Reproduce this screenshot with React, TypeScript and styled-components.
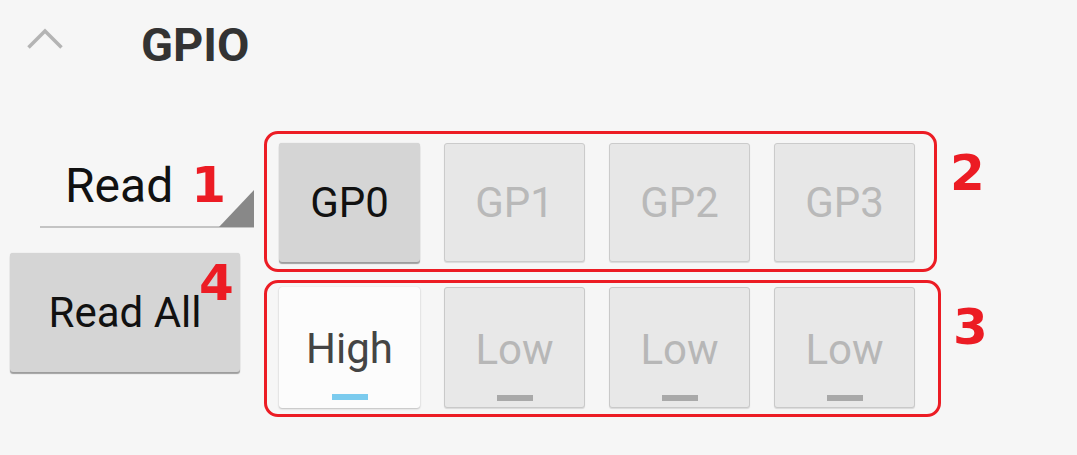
import styled, { createGlobalStyle } from "styled-components";

const GlobalStyle = createGlobalStyle`
  html, body {
    margin: 0;
    padding: 0;
    background: #f6f6f6;
    font-family: Roboto, "Liberation Sans", sans-serif;
  }
`;

const pins = ["GP0", "GP1", "GP2", "GP3"];
const levels = ["High", "Low", "Low", "Low"];

export default function App() {
  return (
    <Page>
      <GlobalStyle />
      <Header>
        <Chevron width="36" height="22" viewBox="0 0 36 22">
          <polyline
            points="1.5,19.5 18,3 34.5,19.5"
            fill="none"
            stroke="#b4b4b4"
            strokeWidth="3.5"
          />
        </Chevron>
        <Title>GPIO</Title>
      </Header>
      <Main>
        <LeftColumn>
          <Spinner>
            <SpinnerText>Read</SpinnerText>
            <Marker $inline>1</Marker>
          </Spinner>
          <ReadAllButton>
            Read All
            <Badge>4</Badge>
          </ReadAllButton>
        </LeftColumn>
        <RightColumn>
          <AnnotatedRow>
            <RedBox $width={673} $pad="9px 12px 7px">
              {pins.map((pin, i) => (
                <PinButton key={pin} $active={i === 0}>
                  {pin}
                </PinButton>
              ))}
            </RedBox>
            <Marker $top={17} $left={13}>
              2
            </Marker>
          </AnnotatedRow>
          <AnnotatedRow>
            <RedBox $width={677} $pad="4px 12px 6px">
              {levels.map((level, i) => (
                <LevelToggle key={i} $on={level === "High"}>
                  <LevelText>{level}</LevelText>
                  <LevelBar />
                </LevelToggle>
              ))}
            </RedBox>
            <Marker $top={22} $left={12}>
              3
            </Marker>
          </AnnotatedRow>
        </RightColumn>
      </Main>
    </Page>
  );
}

const Page = styled.div`
  width: 1077px;
  height: 455px;
  overflow: hidden;
`;

const Header = styled.div`
  display: flex;
  align-items: flex-start;
  padding: 17px 0 0 27px;
`;

const Chevron = styled.svg`
  display: block;
  margin-top: 11px;
`;

const Title = styled.h1`
  margin: 0 0 0 78px;
  font-size: 47px;
  line-height: 56px;
  font-weight: 700;
  color: #333333;
`;

const Main = styled.div`
  display: flex;
  gap: 9px;
  margin-top: 58px;
`;

const LeftColumn = styled.div`
  width: 255px;
  display: flex;
  flex-direction: column;
`;

const Spinner = styled.div`
  position: relative;
  margin: 27px 0 0 40px;
  width: 189px;
  padding: 0 0 12px 25px;
  border-bottom: 2px solid #c4c4c4;
  display: flex;
  align-items: baseline;

  &::after {
    content: "";
    position: absolute;
    right: 0;
    bottom: -1px;
    width: 35px;
    height: 37px;
    background: #888888;
    clip-path: polygon(100% 0, 100% 100%, 0 100%);
  }
`;

const SpinnerText = styled.span`
  font-size: 48px;
  line-height: 56px;
  color: #111111;
`;

const Marker = styled.span<{ $inline?: boolean; $top?: number; $left?: number }>`
  font-family: "DejaVu Sans", sans-serif;
  font-weight: 700;
  font-size: 50px;
  line-height: 50px;
  color: #ec1c24;
  margin-left: ${(p) => (p.$inline ? 18 : p.$left ?? 0)}px;
  margin-top: ${(p) => p.$top ?? 0}px;
  align-self: ${(p) => (p.$inline ? "baseline" : "flex-start")};
`;

const ReadAllButton = styled.div`
  position: relative;
  margin: 25px 0 0 10px;
  width: 230px;
  height: 119px;
  border-radius: 3px;
  background: #d5d5d5;
  box-shadow: 0 2px 1px rgba(0, 0, 0, 0.35), 0 0 1px rgba(0, 0, 0, 0.2);
  display: flex;
  align-items: center;
  justify-content: center;
  font-size: 42px;
  color: #111111;
`;

const Badge = styled.span`
  position: absolute;
  left: 189px;
  top: 5px;
  font-family: "DejaVu Sans", sans-serif;
  font-weight: 700;
  font-size: 50px;
  line-height: 50px;
  color: #ec1c24;
`;

const RightColumn = styled.div`
  display: flex;
  flex-direction: column;
  gap: 8px;
`;

const AnnotatedRow = styled.div`
  display: flex;
  align-items: flex-start;
`;

const RedBox = styled.div<{ $width: number; $pad: string }>`
  box-sizing: border-box;
  width: ${(p) => p.$width}px;
  padding: ${(p) => p.$pad};
  border: 3px solid #ec1c24;
  border-radius: 14px;
  display: flex;
  gap: 24px;
`;

const PinButton = styled.div<{ $active?: boolean }>`
  box-sizing: border-box;
  width: 141px;
  height: 119px;
  border-radius: 3px;
  display: flex;
  align-items: center;
  justify-content: center;
  font-size: 42px;
  background: ${(p) => (p.$active ? "#d5d5d5" : "#e7e7e7")};
  color: ${(p) => (p.$active ? "#111111" : "#b9b9b9")};
  border: ${(p) => (p.$active ? "none" : "1px solid #cbcbcb")};
  box-shadow: ${(p) =>
    p.$active
      ? "0 2px 1px rgba(0,0,0,0.35), 0 0 1px rgba(0,0,0,0.2)"
      : "0 1px 1px rgba(0,0,0,0.12)"};
`;

const LevelToggle = styled.div<{ $on?: boolean }>`
  box-sizing: border-box;
  width: 141px;
  height: 121px;
  border-radius: 3px;
  padding-top: 37px;
  display: flex;
  flex-direction: column;
  align-items: center;
  background: ${(p) => (p.$on ? "#fcfcfc" : "#e8e8e8")};
  color: ${(p) => (p.$on ? "#444444" : "#b7b7b7")};
  border: ${(p) => (p.$on ? "none" : "1px solid #c9c9c9")};
  box-shadow: ${(p) =>
    p.$on
      ? "0 1px 2px rgba(0,0,0,0.22), 0 0 1px rgba(0,0,0,0.15)"
      : "0 1px 1px rgba(0,0,0,0.12)"};

  & > span:last-child {
    background: ${(p) => (p.$on ? "#7bcbee" : "#a9a9a9")};
  }
`;

const LevelText = styled.span`
  font-size: 42px;
  line-height: 50px;
`;

const LevelBar = styled.span`
  display: block;
  width: 36px;
  height: 6px;
  margin-top: 20px;
`;
